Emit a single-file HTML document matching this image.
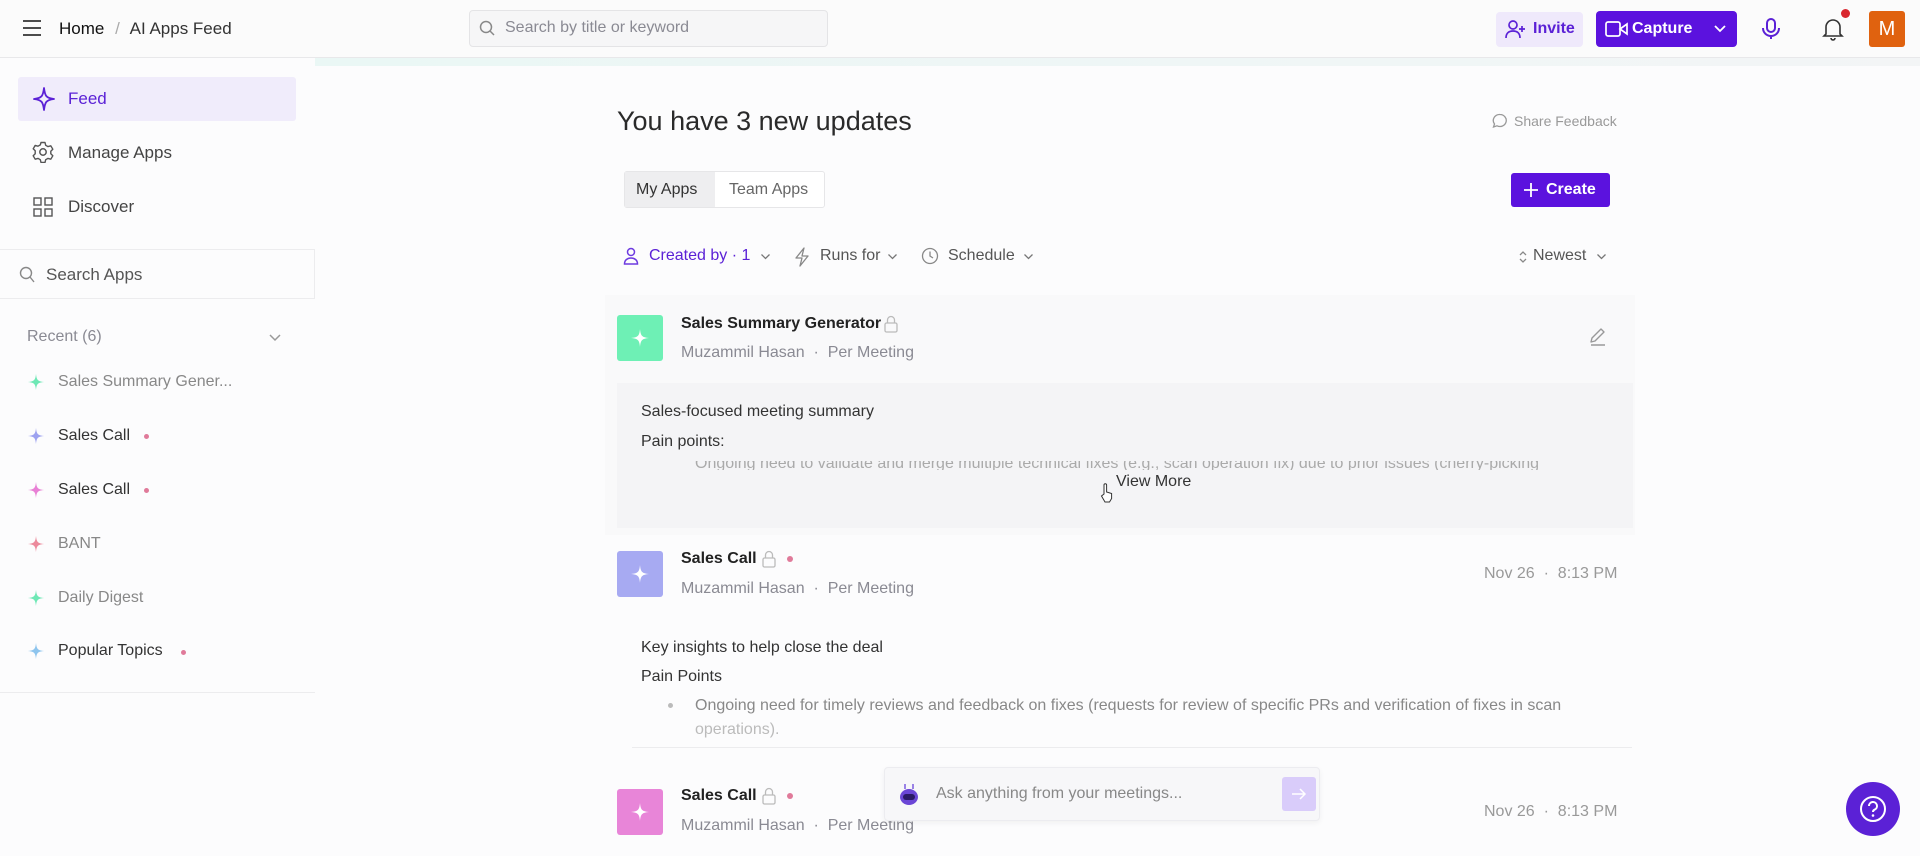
<!DOCTYPE html>
<html><head><meta charset="utf-8"><style>
*{box-sizing:border-box;margin:0;padding:0}
body{width:1920px;height:856px;overflow:hidden;background:#fcfcfd;font-family:"Liberation Sans",sans-serif;color:#222;position:relative}
.a{position:absolute;white-space:nowrap}
.g{color:#8a8a93}
svg{display:block}
</style></head><body>
<div class="a" style="left:0;top:0;width:1920px;height:58px;background:#fbfbfb;border-bottom:1px solid #e8e8ea"></div>
<div class="a" style="left:315px;top:58px;width:1605px;height:8px;background:linear-gradient(90deg,#eaf7f5,#f3f5f6)"></div>
<svg class="a" style="left:22px;top:19px" width="20" height="18" viewBox="0 0 20 18"><path d="M1 2h18M1 9h18M1 16h18" stroke="#333" stroke-width="1.8"/></svg>
<div class="a" style="left:59px;top:19px;font-size:17px;color:#111">Home <span style="color:#aaa;margin:0 6px">/</span> <span style="color:#333">AI Apps Feed</span></div>
<div class="a" style="left:469px;top:10px;width:359px;height:37px;border:1px solid #e4e4e6;border-radius:4px;background:#f6f6f7"></div>
<svg class="a" style="left:479px;top:20px" width="17" height="17" viewBox="0 0 17 17"><circle cx="7" cy="7" r="5.5" fill="none" stroke="#888" stroke-width="1.5"/><path d="M11 11l4 4" stroke="#888" stroke-width="1.5"/></svg>
<div class="a g" style="left:505px;top:19px;font-size:16px">Search by title or keyword</div>
<div class="a" style="left:1496px;top:12px;width:87px;height:35px;border-radius:4px;background:#efe9fb"></div>
<svg class="a" style="left:1505px;top:19px" width="22" height="20" viewBox="0 0 22 20"><circle cx="8" cy="6" r="4" fill="none" stroke="#5b21d6" stroke-width="1.7"/><path d="M1 19c0-5 3-7 7-7s7 2 7 7M17 7v6M14 10h6" fill="none" stroke="#5b21d6" stroke-width="1.7"/></svg>
<div class="a" style="left:1533px;top:20px;font-size:16px;color:#5b21d6;font-weight:bold">Invite</div>
<div class="a" style="left:1596px;top:11px;width:141px;height:36px;border-radius:4px;background:#5b12de"></div>
<svg class="a" style="left:1605px;top:20px" width="24" height="18" viewBox="0 0 24 18"><rect x="1" y="2" width="14" height="14" rx="2" fill="none" stroke="#fff" stroke-width="1.7"/><path d="M15 9l7-5v10z" fill="none" stroke="#fff" stroke-width="1.7"/></svg>
<div class="a" style="left:1632px;top:20px;font-size:16px;color:#fff;font-weight:bold">Capture</div>
<svg class="a" style="left:1713px;top:24px" width="14" height="10" viewBox="0 0 14 10"><path d="M2 2l5 5 5-5" fill="none" stroke="#fff" stroke-width="1.8"/></svg>
<svg class="a" style="left:1761px;top:17px" width="20" height="24" viewBox="0 0 20 24"><rect x="6" y="2" width="8" height="13" rx="4" fill="none" stroke="#5b21d6" stroke-width="2"/><path d="M2 11c0 5 4 8 8 8s8-3 8-8M10 19v3" fill="none" stroke="#5b21d6" stroke-width="2"/></svg>
<svg class="a" style="left:1822px;top:17px" width="22" height="24" viewBox="0 0 22 24"><path d="M4 17V10a7 7 0 0 1 14 0v7l2 2H2zM9 21a2 2 0 0 0 4 0" fill="none" stroke="#333" stroke-width="1.6"/></svg>
<div class="a" style="left:1841px;top:9px;width:9px;height:9px;border-radius:50%;background:#d9262e"></div>
<div class="a" style="left:1869px;top:11px;width:36px;height:36px;border-radius:3px;background:#e0620f;color:#fff;font-size:20px;text-align:center;line-height:36px">M</div>

<div class="a" style="left:18px;top:77px;width:278px;height:44px;border-radius:3px;background:#f0ecfb"></div>
<svg class="a" style="left:33px;top:87px" width="22" height="24" viewBox="0 0 22 24"><path d="M11 1C12 9 13 11 21 12 13 13 12 15 11 23 10 15 9 13 1 12 9 11 10 9 11 1z" fill="none" stroke="#5b21d6" stroke-width="1.8" stroke-linejoin="round"/></svg>
<div class="a" style="left:68px;top:89px;font-size:17px;color:#5b21d6">Feed</div>
<svg class="a" style="left:32px;top:141px" width="22" height="22" viewBox="0 0 22 22"><circle cx="11" cy="11" r="3.2" fill="none" stroke="#555" stroke-width="1.5"/><path d="M9 1.5h4l.7 2.8 2.3 1.3 2.8-.8 2 3.4-2 2 v2.6l2 2-2 3.4-2.8-.8-2.3 1.3-.7 2.8H9l-.7-2.8-2.3-1.3-2.8.8-2-3.4 2-2V9.8l-2-2 2-3.4 2.8.8 2.3-1.3z" fill="none" stroke="#555" stroke-width="1.4" stroke-linejoin="round"/></svg>
<div class="a" style="left:68px;top:143px;font-size:17px;color:#444">Manage Apps</div>
<svg class="a" style="left:33px;top:197px" width="20" height="20" viewBox="0 0 20 20"><g fill="none" stroke="#555" stroke-width="1.4"><rect x="1" y="1" width="7" height="7"/><rect x="12" y="1" width="7" height="7"/><rect x="1" y="12" width="7" height="7"/><rect x="12" y="12" width="7" height="7"/></g></svg>
<div class="a" style="left:68px;top:197px;font-size:17px;color:#444">Discover</div>
<div class="a" style="left:0;top:249px;width:315px;height:50px;border-top:1px solid #ececee;border-bottom:1px solid #ececee;border-right:1px solid #ececee"></div>
<svg class="a" style="left:19px;top:266px" width="16" height="17" viewBox="0 0 16 17"><circle cx="7" cy="7" r="5.5" fill="none" stroke="#888" stroke-width="1.4"/><path d="M11 11l4 5" stroke="#888" stroke-width="1.4"/></svg>
<div class="a" style="left:46px;top:265px;font-size:17px;color:#555">Search Apps</div>
<div class="a g" style="left:27px;top:328px;font-size:16px">Recent (6)</div>
<svg class="a" style="left:268px;top:333px" width="14" height="9" viewBox="0 0 14 9"><path d="M2 2l5 5 5-5" fill="none" stroke="#999" stroke-width="1.5"/></svg>
<div class="a" style="left:0;top:692px;width:315px;border-top:1px solid #ececee"></div>

<div class="a" style="left:617px;top:106px;font-size:27px;color:#2a2a2a">You have 3 new updates</div>
<svg class="a" style="left:1492px;top:113px" width="16" height="16" viewBox="0 0 16 16"><path d="M8 1.5a6.3 6 0 1 1-3 11.3L1.5 14l1-3A6.3 6 0 0 1 8 1.5z" fill="none" stroke="#999" stroke-width="1.3"/></svg>
<div class="a" style="left:1514px;top:113px;font-size:14px;color:#999">Share Feedback</div>
<div class="a" style="left:624px;top:171px;width:201px;height:37px;border:1px solid #e6e6e8;border-radius:3px;background:#fff"></div>
<div class="a" style="left:625px;top:172px;width:90px;height:35px;background:#eeeef0"></div>
<div class="a" style="left:636px;top:181px;font-size:16px;color:#333">My Apps</div>
<div class="a" style="left:729px;top:181px;font-size:16px;color:#666">Team Apps</div>
<div class="a" style="left:1511px;top:173px;width:99px;height:34px;border-radius:3px;background:#5b12de"></div>
<svg class="a" style="left:1523px;top:182px" width="16" height="16" viewBox="0 0 16 16"><path d="M8 1v14M1 8h14" stroke="#fff" stroke-width="1.8"/></svg>
<div class="a" style="left:1546px;top:181px;font-size:16px;color:#fff;font-weight:bold">Create</div>

<svg class="a" style="left:623px;top:247px" width="16" height="18" viewBox="0 0 16 18"><circle cx="8" cy="5" r="3.5" fill="none" stroke="#6d3ae0" stroke-width="1.5"/><path d="M1.5 17c0-4 3-6 6.5-6s6.5 2 6.5 6z" fill="none" stroke="#6d3ae0" stroke-width="1.5"/></svg>
<div class="a" style="left:649px;top:247px;font-size:16px;color:#5b21d6">Created by · 1</div>
<svg class="a" style="left:760px;top:253px" width="11" height="8" viewBox="0 0 11 8"><path d="M1.5 1.5l4 4 4-4" fill="none" stroke="#777" stroke-width="1.3"/></svg>
<svg class="a" style="left:794px;top:247px" width="16" height="20" viewBox="0 0 16 20"><path d="M10 1L2 11h6l-2 8 8-10H8z" fill="none" stroke="#888" stroke-width="1.3" stroke-linejoin="round"/></svg>
<div class="a" style="left:820px;top:247px;font-size:16px;color:#555">Runs for</div>
<svg class="a" style="left:887px;top:253px" width="11" height="8" viewBox="0 0 11 8"><path d="M1.5 1.5l4 4 4-4" fill="none" stroke="#777" stroke-width="1.3"/></svg>
<svg class="a" style="left:921px;top:247px" width="18" height="18" viewBox="0 0 18 18"><circle cx="9" cy="9" r="7.5" fill="none" stroke="#888" stroke-width="1.3"/><path d="M9 4.5V9l3 2" fill="none" stroke="#888" stroke-width="1.3"/></svg>
<div class="a" style="left:948px;top:247px;font-size:16px;color:#555">Schedule</div>
<svg class="a" style="left:1023px;top:253px" width="11" height="8" viewBox="0 0 11 8"><path d="M1.5 1.5l4 4 4-4" fill="none" stroke="#777" stroke-width="1.3"/></svg>
<svg class="a" style="left:1518px;top:249px" width="10" height="16" viewBox="0 0 10 16"><path d="M2 6l3-3 3 3M2 10l3 3 3-3" fill="none" stroke="#888" stroke-width="1.3"/></svg>
<div class="a" style="left:1533px;top:247px;font-size:16px;color:#555">Newest</div>
<svg class="a" style="left:1596px;top:253px" width="11" height="8" viewBox="0 0 11 8"><path d="M1.5 1.5l4 4 4-4" fill="none" stroke="#777" stroke-width="1.3"/></svg>

<!-- card 1 -->
<div class="a" style="left:605px;top:295px;width:1030px;height:240px;background:#f9f9fa"></div>
<div class="a" style="left:617px;top:383px;width:1016px;height:145px;background:#f4f4f6"></div>
<div class="a" style="left:617px;top:315px;width:46px;height:46px;border-radius:3px;background:#6ef0b5"></div>
<svg class="a" style="left:630px;top:328px" width="20" height="20" viewBox="0 0 20 20"><path d="M10 1C10.7 8 12 9.3 19 10 12 10.7 10.7 12 10 19 9.3 12 8 10.7 1 10 8 9.3 9.3 8 10 1z" fill="#fff"/></svg>
<div class="a" style="left:681px;top:315px;font-size:16px;color:#222;font-weight:bold">Sales Summary Generator</div>
<svg class="a" style="left:884px;top:315px" width="14" height="18" viewBox="0 0 14 18"><rect x="1" y="8" width="12" height="9" rx="1.5" fill="none" stroke="#bbb" stroke-width="1.3"/><path d="M3.5 8V5a3.5 3.5 0 0 1 7 0v3" fill="none" stroke="#bbb" stroke-width="1.3"/></svg>
<div class="a g" style="left:681px;top:344px;font-size:16px">Muzammil Hasan &nbsp;·&nbsp; Per Meeting</div>
<svg class="a" style="left:1588px;top:327px" width="20" height="20" viewBox="0 0 20 20"><path d="M3 15l1-4L13 2l3 3-9 9zM3 18h14" fill="none" stroke="#999" stroke-width="1.4" stroke-linejoin="round"/></svg>
<div class="a" style="left:641px;top:403px;font-size:16px;color:#333">Sales-focused meeting summary</div>
<div class="a" style="left:641px;top:433px;font-size:16px;color:#333">Pain points:</div>
<div class="a" style="left:695px;top:461px;width:900px;height:9px;overflow:hidden;font-size:16px;color:#aaa"><div style="margin-top:-6px">Ongoing need to validate and merge multiple technical fixes (e.g., scan operation fix) due to prior issues (cherry-picking</div></div>
<div class="a" style="left:1116px;top:473px;font-size:16px;color:#333">View More</div>
<svg class="a" style="left:1100px;top:483px" width="14" height="20" viewBox="0 0 14 20"><path d="M4 11V2a1.3 1.3 0 0 1 2.6 0v7l5 1.5v5L9.5 19H5L1.5 13z" fill="#fff" stroke="#333" stroke-width="1"/></svg>

<!-- card 2 -->
<div class="a" style="left:617px;top:551px;width:46px;height:46px;border-radius:3px;background:#a7aaf2"></div>
<svg class="a" style="left:630px;top:564px" width="20" height="20" viewBox="0 0 20 20"><path d="M10 1C10.7 8 12 9.3 19 10 12 10.7 10.7 12 10 19 9.3 12 8 10.7 1 10 8 9.3 9.3 8 10 1z" fill="#fff"/></svg>
<div class="a" style="left:681px;top:550px;font-size:16px;color:#222;font-weight:bold">Sales Call</div>
<svg class="a" style="left:762px;top:550px" width="14" height="18" viewBox="0 0 14 18"><rect x="1" y="8" width="12" height="9" rx="1.5" fill="none" stroke="#bbb" stroke-width="1.3"/><path d="M3.5 8V5a3.5 3.5 0 0 1 7 0v3" fill="none" stroke="#bbb" stroke-width="1.3"/></svg>
<div class="a" style="left:787px;top:556px;width:6px;height:6px;border-radius:50%;background:#e07a9a"></div>
<div class="a g" style="left:681px;top:580px;font-size:16px">Muzammil Hasan &nbsp;·&nbsp; Per Meeting</div>
<div class="a" style="left:1484px;top:565px;font-size:16px;color:#999">Nov 26 &nbsp;·&nbsp; 8:13 PM</div>
<div class="a" style="left:641px;top:639px;font-size:16px;color:#333">Key insights to help close the deal</div>
<div class="a" style="left:641px;top:668px;font-size:16px;color:#333">Pain Points</div>
<div class="a" style="left:668px;top:703px;width:5px;height:5px;border-radius:50%;background:#bbb"></div>
<div class="a" style="left:695px;top:697px;font-size:16px;color:#888">Ongoing need for timely reviews and feedback on fixes (requests for review of specific PRs and verification of fixes in scan</div>
<div class="a" style="left:695px;top:721px;font-size:16px;color:#bbb">operations).</div>
<div class="a" style="left:632px;top:747px;width:1000px;border-top:1px solid #ececee"></div>

<!-- card 3 -->
<div class="a" style="left:617px;top:789px;width:46px;height:46px;border-radius:3px;background:#e885d8"></div>
<svg class="a" style="left:630px;top:802px" width="20" height="20" viewBox="0 0 20 20"><path d="M10 1C10.7 8 12 9.3 19 10 12 10.7 10.7 12 10 19 9.3 12 8 10.7 1 10 8 9.3 9.3 8 10 1z" fill="#fff"/></svg>
<div class="a" style="left:681px;top:787px;font-size:16px;color:#222;font-weight:bold">Sales Call</div>
<svg class="a" style="left:762px;top:787px" width="14" height="18" viewBox="0 0 14 18"><rect x="1" y="8" width="12" height="9" rx="1.5" fill="none" stroke="#bbb" stroke-width="1.3"/><path d="M3.5 8V5a3.5 3.5 0 0 1 7 0v3" fill="none" stroke="#bbb" stroke-width="1.3"/></svg>
<div class="a" style="left:787px;top:793px;width:6px;height:6px;border-radius:50%;background:#e07a9a"></div>
<div class="a g" style="left:681px;top:817px;font-size:16px">Muzammil Hasan &nbsp;·&nbsp; Per Meeting</div>
<div class="a" style="left:1484px;top:803px;font-size:16px;color:#999">Nov 26 &nbsp;·&nbsp; 8:13 PM</div>

<!-- chat -->
<div class="a" style="left:884px;top:767px;width:436px;height:54px;background:#f7f7f9;border:1px solid #ececf0;border-radius:4px;box-shadow:0 2px 6px rgba(0,0,0,.05)"></div>
<svg class="a" style="left:898px;top:782px" width="22" height="24" viewBox="0 0 22 24"><path d="M7 2v5M15 2v5" stroke="#7b5be0" stroke-width="1.5"/><ellipse cx="11" cy="15" rx="9" ry="8" fill="#6b46d6"/><rect x="5" y="12" width="12" height="6" rx="3" fill="#2b1a66"/></svg>
<div class="a" style="left:936px;top:785px;font-size:16px;color:#888">Ask anything from your meetings...</div>
<div class="a" style="left:1282px;top:777px;width:34px;height:34px;border-radius:3px;background:#d9ccfa"></div>
<svg class="a" style="left:1291px;top:787px" width="16" height="14" viewBox="0 0 16 14"><path d="M1 7h13M9 2l5 5-5 5" fill="none" stroke="#fff" stroke-width="1.5"/></svg>

<div class="a" style="left:1846px;top:782px;width:54px;height:54px;border-radius:50%;background:#5b21d6"></div>
<svg class="a" style="left:1859px;top:795px" width="28" height="28" viewBox="0 0 28 28"><circle cx="14" cy="14" r="12" fill="none" stroke="#fff" stroke-width="2"/><path d="M10 11a4 4 0 1 1 5.5 3.7c-1 .5-1.5 1.2-1.5 2.3" fill="none" stroke="#fff" stroke-width="2"/><circle cx="14" cy="20.5" r="1.3" fill="#fff"/></svg>

<svg class="a" style="left:27px;top:373px" width="18" height="18" viewBox="0 0 20 20"><path d="M10 1C10.7 8 12 9.3 19 10 12 10.7 10.7 12 10 19 9.3 12 8 10.7 1 10 8 9.3 9.3 8 10 1z" fill="#6ee8b5"/></svg>
<div class="a" style="left:58px;top:373px;font-size:16px;color:#888">Sales Summary Gener...</div>
<svg class="a" style="left:27px;top:427px" width="18" height="18" viewBox="0 0 20 20"><path d="M10 1C10.7 8 12 9.3 19 10 12 10.7 10.7 12 10 19 9.3 12 8 10.7 1 10 8 9.3 9.3 8 10 1z" fill="#9da2f0"/></svg>
<div class="a" style="left:58px;top:427px;font-size:16px;color:#333">Sales Call</div>
<div class="a" style="left:144px;top:434px;width:5px;height:5px;border-radius:50%;background:#e07a9a"></div>
<svg class="a" style="left:27px;top:481px" width="18" height="18" viewBox="0 0 20 20"><path d="M10 1C10.7 8 12 9.3 19 10 12 10.7 10.7 12 10 19 9.3 12 8 10.7 1 10 8 9.3 9.3 8 10 1z" fill="#e880d5"/></svg>
<div class="a" style="left:58px;top:481px;font-size:16px;color:#333">Sales Call</div>
<div class="a" style="left:144px;top:488px;width:5px;height:5px;border-radius:50%;background:#e07a9a"></div>
<svg class="a" style="left:27px;top:535px" width="18" height="18" viewBox="0 0 20 20"><path d="M10 1C10.7 8 12 9.3 19 10 12 10.7 10.7 12 10 19 9.3 12 8 10.7 1 10 8 9.3 9.3 8 10 1z" fill="#ec8a9c"/></svg>
<div class="a" style="left:58px;top:535px;font-size:16px;color:#888">BANT</div>
<svg class="a" style="left:27px;top:589px" width="18" height="18" viewBox="0 0 20 20"><path d="M10 1C10.7 8 12 9.3 19 10 12 10.7 10.7 12 10 19 9.3 12 8 10.7 1 10 8 9.3 9.3 8 10 1z" fill="#6ee8b5"/></svg>
<div class="a" style="left:58px;top:589px;font-size:16px;color:#888">Daily Digest</div>
<svg class="a" style="left:27px;top:642px" width="18" height="18" viewBox="0 0 20 20"><path d="M10 1C10.7 8 12 9.3 19 10 12 10.7 10.7 12 10 19 9.3 12 8 10.7 1 10 8 9.3 9.3 8 10 1z" fill="#8ec5ee"/></svg>
<div class="a" style="left:58px;top:642px;font-size:16px;color:#333">Popular Topics</div>
<div class="a" style="left:181px;top:650px;width:5px;height:5px;border-radius:50%;background:#e07a9a"></div>
</body></html>
